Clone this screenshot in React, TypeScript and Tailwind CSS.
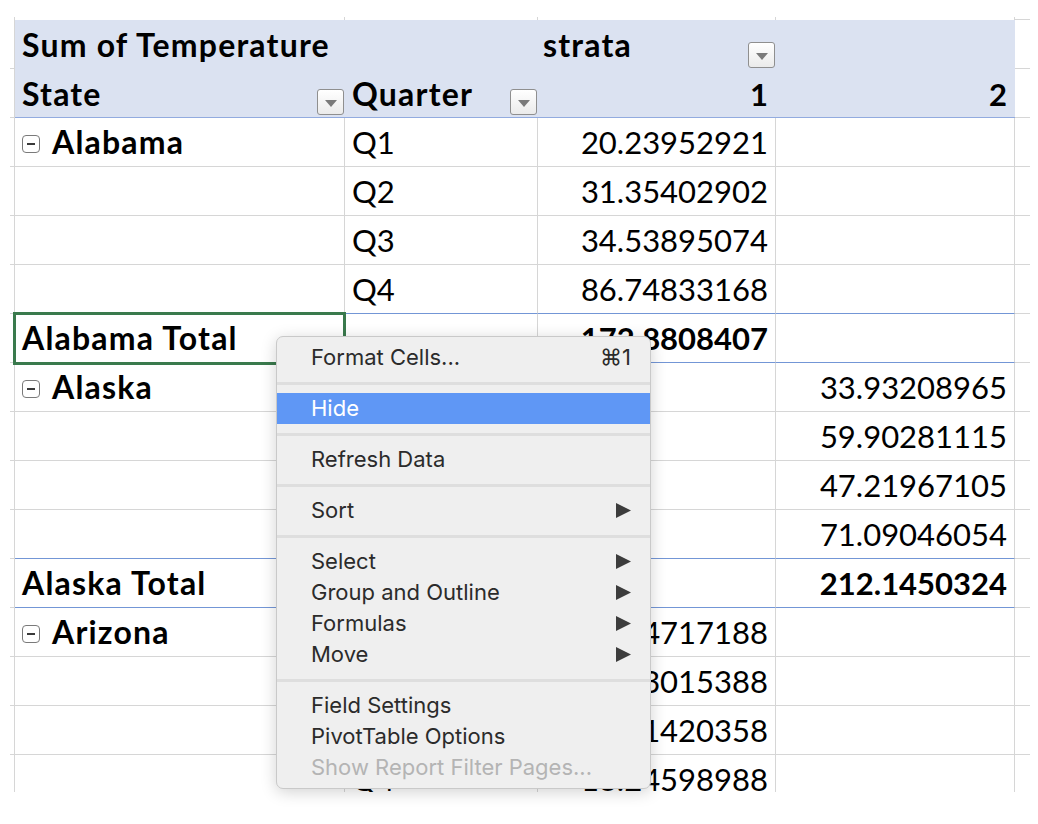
type Row = {
  a?: string;
  icon?: boolean;
  b?: string;
  c?: string;
  d?: string;
  total?: boolean;
  blue?: boolean;
  selected?: boolean;
};

const rows: Row[] = [
  { a: "Alabama", icon: true, b: "Q1", c: "20.23952921" },
  { b: "Q2", c: "31.35402902" },
  { b: "Q3", c: "34.53895074" },
  { b: "Q4", c: "86.74833168", blue: true },
  { a: "Alabama Total", c: "172.8808407", total: true, blue: true, selected: true },
  { a: "Alaska", icon: true, b: "Q1", d: "33.93208965" },
  { b: "Q2", d: "59.90281115" },
  { b: "Q3", d: "47.21967105" },
  { b: "Q4", d: "71.09046054", blue: true },
  { a: "Alaska Total", d: "212.1450324", total: true, blue: true },
  { a: "Arizona", icon: true, b: "Q1", c: "39.94717188" },
  { b: "Q2", c: "42.83015388" },
  { b: "Q3", c: "51.61420358" },
  { b: "Q4", c: "18.24598988" },
];

// bold labels are set a touch wider, like Calibri Bold
const label = "text-[32px] tracking-[1.2px]";

function Dropdown() {
  return (
    <span className="flex h-[26px] w-[27px] shrink-0 items-center justify-center rounded-[3px] border border-[#8f8f8f] bg-gradient-to-b from-white to-[#ebebeb]">
      <svg width="12" height="7" viewBox="0 0 12 7" className="mt-[2px]">
        <path d="M0 0h12L6 7z" fill="#7a7a7a" />
      </svg>
    </span>
  );
}

function Collapse() {
  return (
    <span className="mr-[12px] mb-[5px] flex h-[18px] w-[18px] shrink-0 items-center justify-center rounded-[4px] border-[1.5px] border-[#7a7a7a]">
      <span className="h-[2px] w-[8px] bg-[#3a3a3a]" />
    </span>
  );
}

// thin slice of the neighbouring column on the left
function Sliver() {
  return (
    <div className="flex h-full w-[15px] shrink-0 items-end border-r border-r-[#d6d6d6]">
      <div className="ml-[10px] flex-1 border-b border-b-[#d6d6d6]" />
    </div>
  );
}

function Edge() {
  return <div className="h-full w-[15px] shrink-0 border-b border-b-[#d6d6d6]" />;
}

function BodyRow({ r }: { r: Row }) {
  const bb = r.blue ? "border-b-[#7396d6]" : "border-b-[#d6d6d6]";
  const cell = `flex h-full shrink-0 items-end border-r border-b border-r-[#d6d6d6] ${bb} pb-[8px]`;
  return (
    <div className="flex h-[49px]">
      <Sliver />
      <div className={`relative w-[330px] pl-[7px] ${cell} font-bold`}>
        {r.icon && <Collapse />}
        <span className={label}>{r.a}</span>
        {r.selected && (
          <div className="absolute -top-[2px] -left-[2px] -right-[2px] -bottom-[3px] border-[3px] border-[#3a7a4d]" />
        )}
      </div>
      <div className={`w-[193px] pl-[7px] ${cell}`}>{r.b}</div>
      <div className={`w-[238px] justify-end pr-[7px] ${cell} ${r.total ? "font-bold" : ""}`}>{r.c}</div>
      <div className={`w-[239px] justify-end pr-[7px] ${cell} ${r.total ? "font-bold" : ""}`}>{r.d}</div>
      <Edge />
    </div>
  );
}

function Item({
  text,
  right,
  arrow,
  active,
  disabled,
}: {
  text: string;
  right?: string;
  arrow?: boolean;
  active?: boolean;
  disabled?: boolean;
}) {
  const tone = active ? "bg-[#5f97f5] text-white" : disabled ? "text-[#b4b4b4]" : "text-[#2b2b2b]";
  return (
    <div className={`flex h-[31px] items-center pl-[34px] pr-[19px] ${tone}`}>
      <span className="flex-1">{text}</span>
      {right && <span>{right}</span>}
      {arrow && (
        <svg width="15" height="15" viewBox="0 0 15 15">
          <path d="M0 0L15 7.5L0 15z" fill="#3c3c3c" />
        </svg>
      )}
    </div>
  );
}

function Sep() {
  return (
    <div className="flex h-[20px] items-center">
      <div className="h-[3px] w-full bg-[#dedede]" />
    </div>
  );
}

export default function App() {
  return (
    <div className="relative h-[824px] w-[1038px] overflow-hidden bg-white">
      <div className="h-[792px] overflow-hidden pt-[17px] font-['Lato',sans-serif] text-[31px] leading-none text-black">
        {/* stub of the row above */}
        <div className="flex h-[3px]">
          <div className="w-[15px] shrink-0 border-r border-r-[#d6d6d6]" />
          <div className="w-[330px] shrink-0 border-r border-r-[#d6d6d6]" />
          <div className="w-[193px] shrink-0 border-r border-r-[#d6d6d6]" />
          <div className="w-[238px] shrink-0 border-r border-r-[#d6d6d6]" />
          <div className="w-[239px] shrink-0 border-r border-r-[#d6d6d6]" />
          <div className="w-[15px] shrink-0 border-b border-b-[#d6d6d6]" />
        </div>

        {/* pivot header */}
        <div className="flex h-[49px]">
          <Sliver />
          <div className="flex h-full w-[1000px] shrink-0 bg-[#dbe2f1] font-bold">
            <div className="flex w-[523px] items-end pb-[8px] pl-[7px]">
              <span className={label}>Sum of Temperature</span>
            </div>
            <div className="flex w-[238px] items-end justify-between pl-[5px] pr-[1px] pb-[1px]">
              <span className={`${label} pb-[7px]`}>strata</span>
              <Dropdown />
            </div>
            <div className="w-[239px]" />
          </div>
          <Edge />
        </div>
        <div className="flex h-[49px]">
          <Sliver />
          <div className="flex h-full w-[1000px] shrink-0 border-b border-b-[#92abdf] bg-[#dbe2f1] font-bold">
            <div className="flex w-[330px] items-end justify-between pl-[7px] pr-[1px] pb-[2px]">
              <span className={`${label} pb-[5px]`}>State</span>
              <Dropdown />
            </div>
            <div className="flex w-[193px] items-end justify-between pl-[7px] pr-[1px] pb-[2px]">
              <span className={`${label} pb-[5px]`}>Quarter</span>
              <Dropdown />
            </div>
            <div className="flex w-[238px] items-end justify-end pr-[8px] pb-[7px]">1</div>
            <div className="flex w-[239px] items-end justify-end pr-[8px] pb-[7px]">2</div>
          </div>
          <Edge />
        </div>

        {rows.map((r, i) => (
          <BodyRow key={i} r={r} />
        ))}
      </div>

      {/* context menu */}
      <div className="absolute top-[336px] left-[276px] w-[375px] rounded-[7px] border border-[#c9c9c9] bg-[#efefef] pt-[5px] pb-[5px] font-['Inter',sans-serif] text-[22px] shadow-[0_3px_16px_rgba(0,0,0,0.18)]">
        <Item text="Format Cells..." right="⌘1" />
        <Sep />
        <Item text="Hide" active />
        <Sep />
        <Item text="Refresh Data" />
        <Sep />
        <Item text="Sort" arrow />
        <Sep />
        <Item text="Select" arrow />
        <Item text="Group and Outline" arrow />
        <Item text="Formulas" arrow />
        <Item text="Move" arrow />
        <Sep />
        <Item text="Field Settings" />
        <Item text="PivotTable Options" />
        <Item text="Show Report Filter Pages..." disabled />
      </div>
    </div>
  );
}
